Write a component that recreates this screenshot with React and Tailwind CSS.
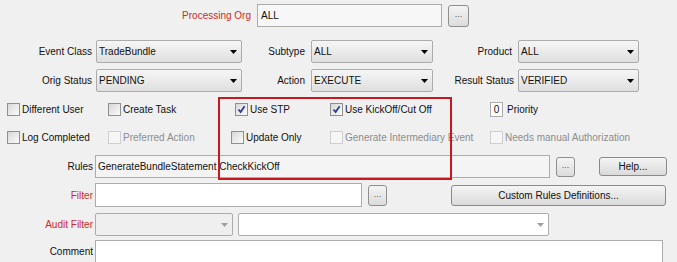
import React from "react";

const Arrow = ({ gray }) => (
  <svg width="7" height="4" viewBox="0 0 7 4" className="shrink-0">
    <polygon points="0,0 7,0 3.5,4" fill={gray ? "#a0a0a0" : "#000"} />
  </svg>
);

const Select = ({ value, className, disabled, white }) => (
  <div
    className={`h-[23px] shrink-0 flex items-center justify-between border border-[#acacac] rounded-[2px] pl-[2px] pr-[4px] ${className} ${
      white
        ? "bg-white"
        : disabled
        ? "bg-[#efefef]"
        : "bg-linear-to-b from-[#f6f6f6] to-[#dfdfdf]"
    }`}
  >
    <span>{value}</span>
    <Arrow gray={disabled || white} />
  </div>
);

const Dots = ({ className }) => (
  <div
    className={`shrink-0 flex items-center justify-center border border-[#8e8f8f] rounded-[3px] bg-linear-to-b from-[#f4f4f4] to-[#dcdcdc] text-[#555] text-[9px] leading-none pb-[2px] ${className}`}
  >
    ...
  </div>
);

const Button = ({ children, className }) => (
  <div
    className={`shrink-0 flex items-center justify-center border border-[#8a8a8a] rounded-[3px] bg-linear-to-b from-[#f5f5f5] to-[#dadada] ${className}`}
  >
    {children}
  </div>
);

const Check = ({ checked, disabled }) => (
  <div
    className={`w-[13px] h-[13px] shrink-0 border flex items-center justify-center ${
      disabled
        ? "border-[#cfcfcf] bg-[#f6f6f6]"
        : "border-[#8e8f8f] bg-linear-to-br from-[#d8d8d8] to-[#fbfbfb]"
    }`}
  >
    {checked && (
      <svg width="9" height="9" viewBox="0 0 9 9">
        <path
          d="M1.5 4.5 L3.6 7 L7.6 1.2"
          fill="none"
          stroke="#2c3f84"
          strokeWidth="1.8"
        />
      </svg>
    )}
  </div>
);

const CheckItem = ({ label, checked, disabled, className }) => (
  <div className={`flex items-center gap-[2px] shrink-0 ${className}`}>
    <Check checked={checked} disabled={disabled} />
    <span className={disabled ? "text-[#8d8d8d]" : ""}>{label}</span>
  </div>
);

const Label = ({ children, className, red }) => (
  <div
    className={`shrink-0 text-right ${red ? "text-[#cf2a2a]" : ""} ${className}`}
  >
    {children}
  </div>
);

export default function App() {
  return (
    <div className="relative w-[677px] h-[262px] overflow-hidden bg-[#f0f0f0] text-[10px] text-[#111] font-['Liberation_Sans',Arial,sans-serif]">
      {/* processing org */}
      <div className="flex items-center h-[23px] mt-[4px]">
        <Label red className="w-[257px] pr-[6px]">
          Processing Org
        </Label>
        <div className="w-[185px] h-[23px] flex items-center pl-[3px] border border-[#acacac] bg-[#f7f7f7]">
          ALL
        </div>
        <Dots className="ml-[6px] w-[21px] h-[22px]" />
      </div>

      {/* selects */}
      <div className="flex items-center h-[23px] mt-[13px]">
        <Label className="w-[96px] pr-[4px]">Event Class</Label>
        <Select value="TradeBundle" className="w-[146px]" />
        <Label className="w-[69px] pr-[6px]">Subtype</Label>
        <Select value="ALL" className="w-[122px]" />
        <Label className="w-[85px] pr-[6px]">Product</Label>
        <Select value="ALL" className="w-[121px]" />
      </div>
      <div className="flex items-center h-[23px] mt-[6px]">
        <Label className="w-[96px] pr-[4px]">Orig Status</Label>
        <Select value="PENDING" className="w-[146px]" />
        <Label className="w-[69px] pr-[6px]">Action</Label>
        <Select value="EXECUTE" className="w-[122px]" />
        <Label className="w-[85px] pr-[4px]">Result Status</Label>
        <Select value="VERIFIED" className="w-[121px]" />
      </div>

      {/* checkboxes */}
      <div className="flex items-center h-[15px] mt-[10px] pl-[7px]">
        <CheckItem label="Different User" className="w-[101px]" />
        <CheckItem label="Create Task" className="w-[127px]" />
        <CheckItem label="Use STP" checked className="w-[95px]" />
        <CheckItem label="Use KickOff/Cut Off" checked className="w-[160px]" />
        <div className="w-[13px] h-[15px] flex items-center justify-center border border-[#acacac] bg-white">
          0
        </div>
        <span className="ml-[4px]">Priority</span>
      </div>
      <div className="flex items-center h-[15px] mt-[13px] pl-[7px]">
        <CheckItem label="Log Completed" className="w-[101px]" />
        <CheckItem label="Preferred Action" disabled className="w-[123px]" />
        <CheckItem label="Update Only" className="w-[99px]" />
        <CheckItem
          label="Generate Intermediary Event"
          disabled
          className="w-[160px]"
        />
        <CheckItem label="Needs manual Authorization" disabled />
      </div>

      {/* rules */}
      <div className="flex items-center h-[23px] mt-[10px]">
        <Label className="w-[95px] pr-[2px]">Rules</Label>
        <div className="w-[455px] h-[23px] flex items-center pl-[2px] border border-[#acacac] bg-[#f4f4f4]">
          GenerateBundleStatement CheckKickOff
        </div>
        <Dots className="ml-[6px] w-[19px] h-[20px]" />
        <Button className="ml-[24px] w-[68px] h-[19px]">Help...</Button>
      </div>
      <div className="flex items-center h-[24px] mt-[5px]">
        <Label red className="w-[95px] pr-[2px]">
          Filter
        </Label>
        <div className="w-[267px] h-[24px] border border-[#acacac] bg-white" />
        <Dots className="ml-[6px] w-[19px] h-[21px]" />
        <Button className="ml-[64px] w-[215px] h-[21px]">
          Custom Rules Definitions...
        </Button>
      </div>
      <div className="flex items-center h-[23px] mt-[6px]">
        <Label red className="w-[95px] pr-[2px]">
          Audit Filter
        </Label>
        <Select value="" disabled className="w-[138px]" />
        <Select value="" white className="ml-[5px] w-[311px]" />
      </div>
      <div className="flex items-start mt-[4px]">
        <Label className="w-[95px] pr-[2px] pt-[4px]">Comment</Label>
        <div className="w-[568px] h-[40px] border border-[#acacac] bg-white" />
      </div>

      {/* highlight */}
      <div className="absolute left-[218px] top-[97px] w-[234px] h-[83px] border-2 border-[#c8171e]" />
    </div>
  );
}
